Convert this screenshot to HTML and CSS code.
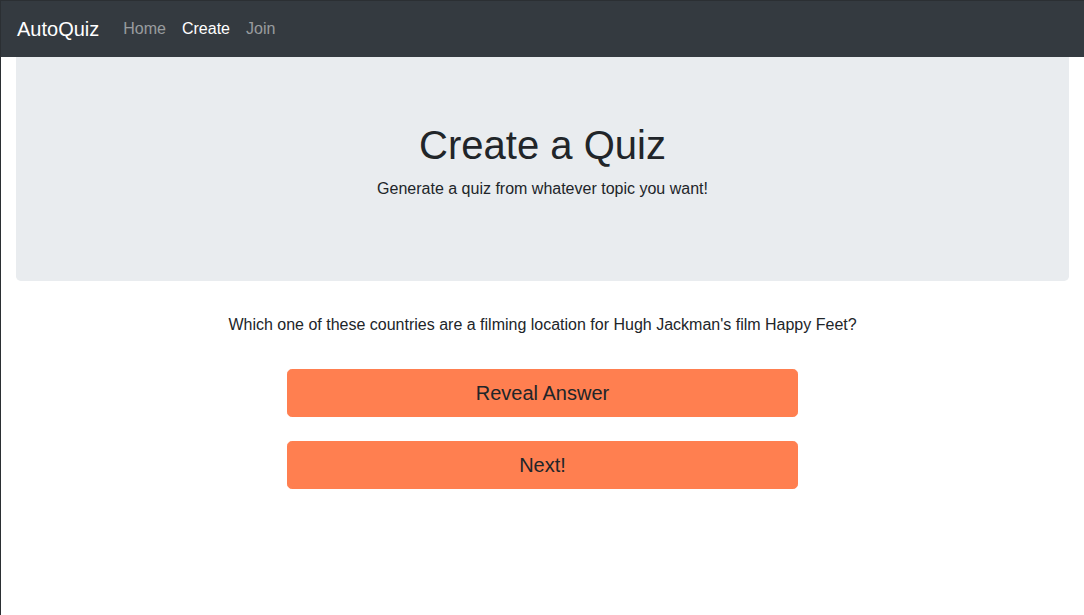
FILE: index.html
```html
<!DOCTYPE html>
<html lang="en">
<head>
<meta charset="utf-8">
<title>AutoQuiz</title>
<link rel="stylesheet" href="styles.css">
</head>
<body>
<div class="page">
  <nav class="navbar">
    <a class="brand" href="#">AutoQuiz</a>
    <ul class="nav">
      <li><a class="nav-link" href="#">Home</a></li>
      <li><a class="nav-link active" href="#">Create</a></li>
      <li><a class="nav-link" href="#">Join</a></li>
    </ul>
  </nav>
  <main class="container">
    <section class="jumbotron">
      <h1 class="title">Create a Quiz</h1>
      <p class="lead">Generate a quiz from whatever topic you want!</p>
    </section>
    <p class="question">Which one of these countries are a filming location for Hugh Jackman's film Happy Feet?</p>
    <div class="actions">
      <button class="btn">Reveal Answer</button>
      <button class="btn">Next!</button>
    </div>
  </main>
</div>
</body>
</html>
```

FILE: styles.css
```css
* { box-sizing: border-box; }
html, body { margin: 0; padding: 0; height: 100%; }
body {
  font-family: "Liberation Sans", Arial, sans-serif;
  font-size: 16px;
  line-height: 1.5;
  color: #212529;
  background: #fff;
}
.page {
  min-height: 100%;
  border-left: 1px solid #2b2f33;
  border-top: 1px solid #2b2f33;
}
.navbar {
  display: flex;
  align-items: center;
  background: #343a40;
  padding: 8px 16px;
  height: 56px;
}
.brand {
  font-size: 20px;
  line-height: 30px;
  padding: 5px 0;
  margin-right: 16px;
  color: #fff;
  text-decoration: none;
}
.nav {
  display: flex;
  list-style: none;
  margin: 0;
  padding: 0;
}
.nav-link {
  display: block;
  padding: 8px 8px;
  color: rgba(255, 255, 255, 0.5);
  text-decoration: none;
}
.nav-link.active { color: #fff; }
.container {
  padding: 0 15px;
}
.jumbotron {
  background: #e9ecef;
  border-radius: 0 0 4.8px 4.8px;
  padding: 64px 32px;
  margin-bottom: 32px;
  text-align: center;
}
.title {
  margin: 0 0 8px;
  font-size: 40px;
  font-weight: 400;
  line-height: 1.2;
}
.lead {
  margin: 0 0 16px;
}
.question {
  margin: 0 0 32px;
  text-align: center;
}
.actions {
  display: flex;
  flex-direction: column;
  align-items: center;
  gap: 24px;
}
.btn {
  width: 511px;
  height: 48px;
  font-family: inherit;
  font-size: 20px;
  line-height: 1.5;
  padding: 8px 16px;
  color: #212529;
  background: #ff7f50;
  border: 1px solid #ff7f50;
  border-radius: 4.8px;
  cursor: pointer;
}
```
